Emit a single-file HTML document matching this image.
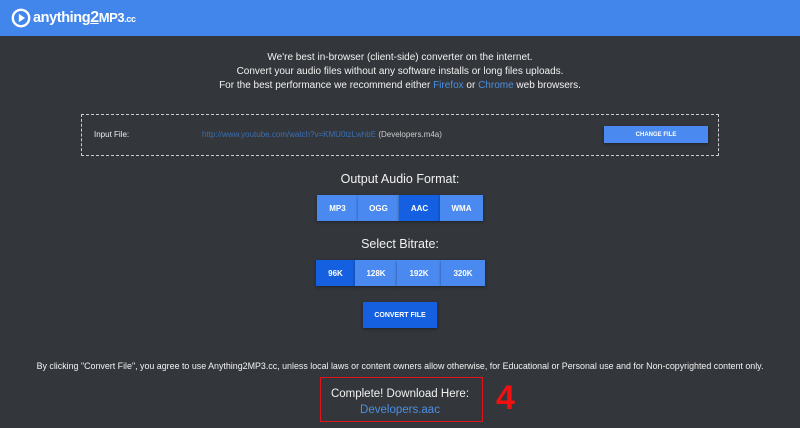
<!DOCTYPE html>
<html><head><style>
*{margin:0;padding:0;box-sizing:border-box}
body{width:800px;height:428px;background:#33363b;font-family:"Liberation Sans",sans-serif;color:#eee;position:relative;overflow:hidden}
.hdr{position:absolute;left:0;top:0;width:800px;height:36px;background:#4286ec}
.logo{position:absolute;left:33px;top:9px;font-weight:bold;color:#fff;font-size:14.5px;letter-spacing:-0.4px;line-height:18px}
.t{position:absolute;left:0;width:800px;text-align:center;font-size:10px;color:#f2f2f2}
a{color:#4a90e2;text-decoration:none}
.box{position:absolute;left:81px;top:114px;width:638px;height:42px;border:1px dashed #ccc}
.btn{position:absolute;background:#4a8af0;color:#fff;font-size:8px;font-weight:bold;text-align:center;box-shadow:0 1px 3px rgba(0,0,0,.4);display:flex;align-items:center;justify-content:center}
.sel{background:#1560e0}
</style></head><body>
<div class="hdr">
<svg style="position:absolute;left:11px;top:8px" width="20" height="20" viewBox="0 0 20 20"><circle cx="10" cy="10" r="8.2" fill="none" stroke="#fff" stroke-width="2.4"/><path d="M7.8 5.8L14 10L7.8 14.2Z" fill="#fff"/></svg>
<div class="logo">anything<span style="text-decoration:underline;font-size:16px">2</span><span style="font-size:13px">MP3</span><span style="font-size:9px">.cc</span></div>
</div>
<div class="t" style="top:52px">We're best in-browser (client-side) converter on the internet.</div>
<div class="t" style="top:66px">Convert your audio files without any software installs or long files uploads.</div>
<div class="t" style="top:80px">For the best performance we recommend either <a>Firefox</a> or <a>Chrome</a> web browsers.</div>
<div class="box">
<div style="position:absolute;left:12px;top:15px;font-size:8px;color:#eee">Input File:</div>
<div style="position:absolute;left:120px;top:15px;font-size:8px;color:#ccc"><a style="color:#3a6fb5">http://www.youtube.com/watch?v=KMU0tzLwhbE</a> (Developers.m4a)</div>
<div class="btn" style="left:522px;top:11px;width:104px;height:17px;font-size:6px">CHANGE FILE</div>
</div>
<div class="t" style="top:172px;font-size:12.5px">Output Audio Format:</div>
<div class="btn" style="left:317px;top:195px;width:41px;height:26px">MP3</div>
<div class="btn" style="left:358px;top:195px;width:41px;height:26px">OGG</div>
<div class="btn sel" style="left:399px;top:195px;width:41px;height:26px">AAC</div>
<div class="btn" style="left:440px;top:195px;width:43px;height:26px">WMA</div>
<div class="t" style="top:237px;font-size:12.5px">Select Bitrate:</div>
<div class="btn sel" style="left:316px;top:260px;width:39px;height:26px">96K</div>
<div class="btn" style="left:355px;top:260px;width:42px;height:26px">128K</div>
<div class="btn" style="left:397px;top:260px;width:44px;height:26px">192K</div>
<div class="btn" style="left:441px;top:260px;width:44px;height:26px">320K</div>
<div class="btn sel" style="left:363px;top:302px;width:74px;height:26px;font-size:7px">CONVERT FILE</div>
<div class="t" style="top:361px;font-size:8.9px">By clicking "Convert File", you agree to use Anything2MP3.cc, unless local laws or content owners allow otherwise, for Educational or Personal use and for Non-copyrighted content only.</div>
<div style="position:absolute;left:320px;top:377px;width:163px;height:45px;border:1.5px solid #e0141a"></div>
<div class="t" style="top:388px;font-size:11.5px">Complete! Download Here:</div>
<div class="t" style="top:404px;font-size:11.5px"><a>Developers.aac</a></div>
<div style="position:absolute;left:496px;top:379px;font-size:34px;font-weight:bold;color:#f01010;font-family:'Liberation Sans',sans-serif">4</div>
</body></html>
